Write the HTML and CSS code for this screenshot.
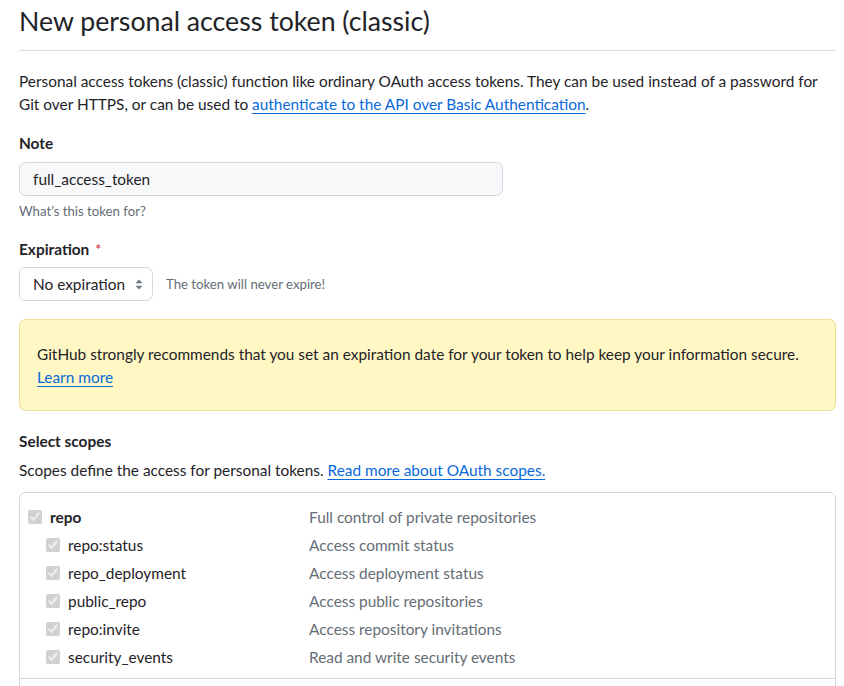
FILE: index.html
```html
<!DOCTYPE html>
<html lang="en">
<head>
<meta charset="utf-8">
<title>New personal access token (classic)</title>
<link rel="stylesheet" href="styles.css">
</head>
<body>
<main class="page">
  <h1 class="subhead">New personal access token (classic)</h1>
  <p class="intro">Personal access tokens (classic) function like ordinary OAuth access tokens. They can be used instead of a password for Git over HTTPS, or can be used to <a href="#" class="link">authenticate to the API over Basic Authentication</a>.</p>

  <div class="field">
    <label class="label" for="note">Note</label>
    <input class="input" id="note" type="text" value="full_access_token">
    <p class="hint">What’s this token for?</p>
  </div>

  <div class="field field-exp">
    <div class="label">Expiration <span class="req">*</span></div>
    <div class="exp-row">
      <div class="select">
        <span>No expiration</span>
        <svg class="caret" width="8" height="11" viewBox="0 0 8 11" aria-hidden="true"><path d="M4 0.5 L7.5 4.3 H0.5 Z M4 10.5 L7.5 6.7 H0.5 Z" fill="#6e7781"/></svg>
      </div>
      <span class="exp-note">The token will never expire!</span>
    </div>
  </div>

  <div class="flash">
    GitHub strongly recommends that you set an expiration date for your token to help keep your information secure. <a href="#" class="link">Learn more</a>
  </div>

  <h3 class="scopes-title">Select scopes</h3>
  <p class="scopes-desc">Scopes define the access for personal tokens. <a href="#" class="link">Read more about OAuth scopes.</a></p>

  <div class="scopes">
    <div class="group">
      <div class="row parent">
        <label class="name"><input type="checkbox" class="cb" checked disabled><span>repo</span></label>
        <span class="desc">Full control of private repositories</span>
      </div>
      <div class="row child">
        <label class="name"><input type="checkbox" class="cb" checked disabled><span>repo:status</span></label>
        <span class="desc">Access commit status</span>
      </div>
      <div class="row child">
        <label class="name"><input type="checkbox" class="cb" checked disabled><span>repo_deployment</span></label>
        <span class="desc">Access deployment status</span>
      </div>
      <div class="row child">
        <label class="name"><input type="checkbox" class="cb" checked disabled><span>public_repo</span></label>
        <span class="desc">Access public repositories</span>
      </div>
      <div class="row child">
        <label class="name"><input type="checkbox" class="cb" checked disabled><span>repo:invite</span></label>
        <span class="desc">Access repository invitations</span>
      </div>
      <div class="row child">
        <label class="name"><input type="checkbox" class="cb" checked disabled><span>security_events</span></label>
        <span class="desc">Read and write security events</span>
      </div>
    </div>
    <div class="group group-next"></div>
  </div>
</main>
</body>
</html>
```

FILE: styles.css
```css
* { box-sizing: border-box; }

html, body {
  margin: 0;
  background: #ffffff;
}

body {
  font-family: Lato, "Liberation Sans", Arial, sans-serif;
  font-size: 15.4px;
  line-height: 23.1px;
  color: #1f2328;
}

.page {
  padding: 0 8px 0 19px;
}

.subhead {
  margin: 0;
  padding: 5px 0 12px;
  font-size: 26.7px;
  line-height: 33px;
  font-weight: 400;
  border-bottom: 1px solid #d8dee4;
}

.intro {
  margin: 19px 0 0;
}

.link {
  color: #0969da;
  text-decoration: underline;
  text-underline-offset: 3px;
  text-decoration-thickness: 1px;
}

.field {
  margin-top: 16px;
}

.field-exp {
  margin-top: 17px;
}

.label {
  display: block;
  font-weight: 700;
  line-height: 23px;
}

.req {
  color: #d1242f;
  font-weight: 400;
  margin-left: 2px;
}

.input {
  display: block;
  margin-top: 7px;
  width: 484px;
  height: 34px;
  padding: 0 13px;
  border: 1px solid #d0d7de;
  border-radius: 6.6px;
  background: #f6f8fa;
  font: inherit;
  color: #1f2328;
}

.hint {
  margin: 5px 0 0;
  font-size: 13.2px;
  line-height: 20px;
  color: #656d76;
}

.exp-row {
  display: flex;
  align-items: center;
  gap: 13px;
  margin-top: 6px;
}

.select {
  display: flex;
  align-items: center;
  justify-content: space-between;
  width: 134px;
  height: 34px;
  padding: 0 9px 0 13px;
  border: 1px solid #d0d7de;
  border-radius: 6.6px;
  background: #ffffff;
}

.exp-note {
  font-size: 13.2px;
  color: #656d76;
}

.flash {
  margin-top: 18px;
  padding: 23px 17px 21px;
  background: #fff8c5;
  border: 1px solid #f0dd96;
  border-radius: 6.6px;
}

.scopes-title {
  margin: 19px 0 0;
  font-size: 15.4px;
  line-height: 23px;
  font-weight: 700;
}

.scopes-desc {
  margin: 6px 0 0;
}

.scopes {
  margin-top: 10px;
  border: 1px solid #d0d7de;
  border-radius: 6.6px;
}

.group {
  padding: 10px 8px 7px;
}

.group-next {
  height: 40px;
  border-top: 1px solid #d0d7de;
}

.row {
  display: grid;
  grid-template-columns: 281px 1fr;
  height: 28px;
  align-items: center;
}

.name {
  display: flex;
  align-items: center;
  gap: 8px;
}

.child .name {
  padding-left: 18px;
}

.parent .name span {
  font-weight: 700;
}

.cb {
  width: 14px;
  height: 14px;
  margin: 0;
}

.desc {
  color: #656d76;
}
```
